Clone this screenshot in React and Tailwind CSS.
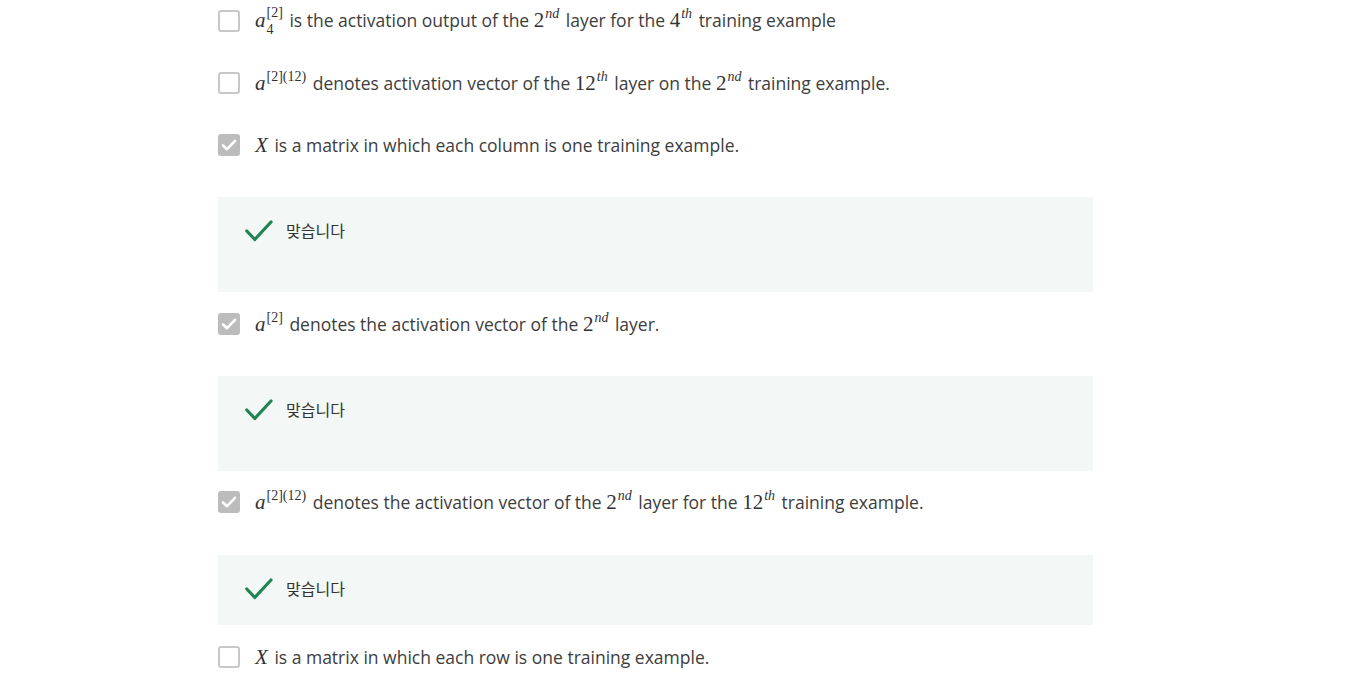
import React from "react";

const TEXT_FONT = "font-['Open_Sans','Noto_Sans_CJK_KR',sans-serif]";
const MATH_FONT = "font-['Liberation_Serif','DejaVu_Serif',serif]";

// math helpers
const M = ({ children }) => (
  <span className={`${MATH_FONT} text-[21px] leading-none text-[#333] mr-[2px]`}>{children}</span>
);
const I = ({ children }) => <span className="italic">{children}</span>;
const Sup = ({ children }) => (
  <span className="relative -top-[9px] text-[14px] leading-none ml-[1px]">{children}</span>
);
const SupSub = ({ sup, sub }) => (
  <span className="inline-flex flex-col align-[10px] text-[14px] leading-[17px] ml-[1px]">
    <span>{sup}</span>
    <span>{sub}</span>
  </span>
);

const CheckBox = ({ checked }) =>
  checked ? (
    <span className="w-[22px] h-[22px] shrink-0 rounded-[3px] bg-[#bcbcbc] flex items-center justify-center">
      <svg width="18" height="18" viewBox="0 0 18 18" fill="none">
        <path d="M3 9.5 L7 13.2 L15 4.8" stroke="white" strokeWidth="2.6" strokeLinecap="round" strokeLinejoin="round" />
      </svg>
    </span>
  ) : (
    <span className="w-[22px] h-[22px] shrink-0 rounded-[3px] border-2 border-[#c8c8c8] bg-white" />
  );

const Option = ({ checked, children, className = "" }) => (
  <div className={`h-[42px] flex items-center ${className}`}>
    <CheckBox checked={checked} />
    <div className={`ml-[15px] ${TEXT_FONT} text-[17.5px] text-[#3d3d3d] whitespace-nowrap`}>{children}</div>
  </div>
);

const Feedback = ({ className = "" }) => (
  <div className={`bg-[#f3f8f6] pl-[27px] pt-[24px] ${className}`}>
    <div className="flex items-center h-[20px]">
      <svg width="28" height="22" viewBox="0 0 28 22" fill="none">
        <path d="M1.8 11 L9.8 19.5 L26 2" stroke="#1f8354" strokeWidth="3.2" strokeLinecap="round" strokeLinejoin="round" />
      </svg>
      <span className={`ml-[13px] ${TEXT_FONT} text-[16px] text-[#333]`}>맞습니다</span>
    </div>
  </div>
);

export default function App() {
  return (
    <div className="w-[1370px] h-[687px] bg-white overflow-hidden">
      <div className="ml-[218px] w-[875px]">
        <Option>
          <M>
            <I>a</I>
            <SupSub sup="[2]" sub="4" />
          </M>{" "}
          is the activation output of the{" "}
          <M>
            2<Sup><I>nd</I></Sup>
          </M>{" "}
          layer for the{" "}
          <M>
            4<Sup><I>th</I></Sup>
          </M>{" "}
          training example
        </Option>

        <Option className="mt-[20px]">
          <M>
            <I>a</I>
            <Sup>[2](12)</Sup>
          </M>{" "}
          denotes activation vector of the{" "}
          <M>
            12<Sup><I>th</I></Sup>
          </M>{" "}
          layer on the{" "}
          <M>
            2<Sup><I>nd</I></Sup>
          </M>{" "}
          training example.
        </Option>

        <Option checked className="mt-[20px]">
          <M>
            <I>X</I>
          </M>{" "}
          is a matrix in which each column is one training example.
        </Option>
        <Feedback className="mt-[31px] h-[95px]" />

        <Option checked className="mt-[11px]">
          <M>
            <I>a</I>
            <Sup>[2]</Sup>
          </M>{" "}
          denotes the activation vector of the{" "}
          <M>
            2<Sup><I>nd</I></Sup>
          </M>{" "}
          layer.
        </Option>
        <Feedback className="mt-[31px] h-[95px]" />

        <Option checked className="mt-[10px]">
          <M>
            <I>a</I>
            <Sup>[2](12)</Sup>
          </M>{" "}
          denotes the activation vector of the{" "}
          <M>
            2<Sup><I>nd</I></Sup>
          </M>{" "}
          layer for the{" "}
          <M>
            12<Sup><I>th</I></Sup>
          </M>{" "}
          training example.
        </Option>
        <Feedback className="mt-[32px] h-[70px]" />

        <Option className="mt-[11px]">
          <M>
            <I>X</I>
          </M>{" "}
          is a matrix in which each row is one training example.
        </Option>
      </div>
    </div>
  );
}
